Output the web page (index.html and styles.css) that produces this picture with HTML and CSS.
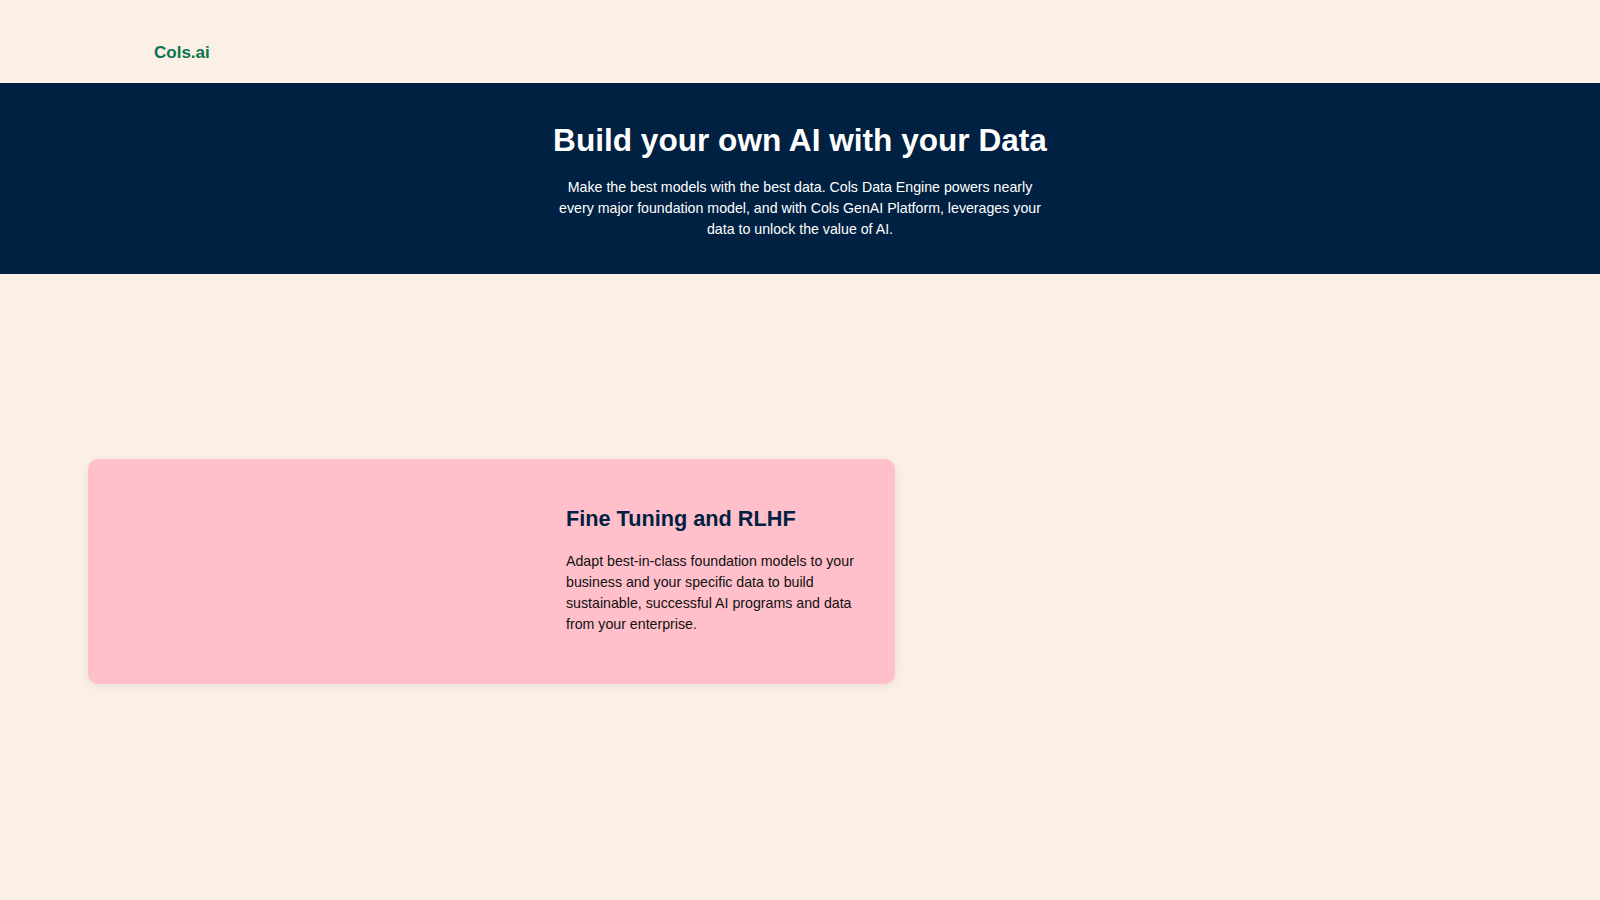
FILE: index.html
```html
<!DOCTYPE html>
<html lang="en">
<head>
<meta charset="utf-8">
<title>Cols.ai</title>
<link rel="stylesheet" href="styles.css">
</head>
<body>
<header class="site-header">
  <div class="logo">Cols.ai</div>
</header>
<section class="hero">
  <h1 class="hero-title">Build your own AI with your Data</h1>
  <p class="hero-text">Make the best models with the best data. Cols Data Engine powers nearly every major foundation model, and with Cols GenAI Platform, leverages your data to unlock the value of AI.</p>
</section>
<main class="features">
  <article class="card">
    <div class="card-media"></div>
    <div class="card-body">
      <h2 class="card-title">Fine Tuning and RLHF</h2>
      <p class="card-text">Adapt best-in-class foundation models to your business and your specific data to build sustainable, successful AI programs and data from your enterprise.</p>
    </div>
  </article>
</main>
</body>
</html>
```

FILE: styles.css
```css
* { box-sizing: border-box; }
html, body { margin: 0; padding: 0; }
body {
  background: #faf0e6;
  font-family: "Liberation Sans", Arial, sans-serif;
  min-height: 900px;
}
.site-header {
  height: 83px;
  padding: 43px 0 0 154px;
}
.logo {
  font-size: 17px;
  font-weight: 700;
  color: #0a7450;
}
.hero {
  background: #012142;
  color: #ffffff;
  text-align: center;
  padding: 39px 0 34px;
}
.hero-title {
  margin: 0;
  font-size: 31.6px;
  font-weight: 700;
}
.hero-text {
  margin: 18px auto 0;
  max-width: 490px;
  font-size: 14.2px;
  line-height: 21px;
}
.features {
  padding: 185px 0 0 88px;
}
.card {
  width: 807px;
  display: flex;
  background: #ffc0cb;
  border-radius: 10px;
  box-shadow: 0 2px 10px rgba(0, 0, 0, 0.08);
  padding: 47px 34px 49px 0;
}
.card-media {
  flex: 0 0 478px;
}
.card-body {
  flex: 1;
}
.card-title {
  margin: 0 0 19px;
  font-size: 21.7px;
  font-weight: 700;
  color: #012142;
}
.card-text {
  margin: 0;
  font-size: 14.2px;
  line-height: 21px;
  color: #111111;
}
```
